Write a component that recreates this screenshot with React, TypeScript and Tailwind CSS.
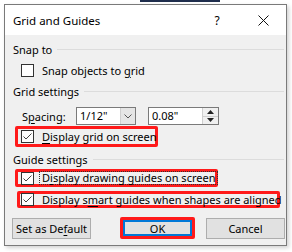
function Check({ checked }: { checked: boolean }) {
  return (
    <span className="flex h-[13px] w-[13px] shrink-0 items-center justify-center border border-[#333333] bg-white">
      {checked && (
        <svg width="11" height="11" viewBox="0 0 11 11" fill="none">
          <path d="M1.5 5.5 L4 8 L9.5 2.5" stroke="#444444" strokeWidth="1" />
        </svg>
      )}
    </span>
  )
}

function GroupLabel({ children }: { children: React.ReactNode }) {
  return (
    <div className="flex h-[16px] items-center gap-[5px] pl-[8px] pr-[2px]">
      <span className="text-[#000000]">{children}</span>
      <span className="h-px flex-1 bg-[#dcdcdc]" />
    </div>
  )
}

function Button({ children, focused }: { children: React.ReactNode; focused?: boolean }) {
  if (focused) {
    return (
      <div className="flex h-[22px] w-[75px] items-stretch rounded-[2px] border-[3px] border-[#ff1a1a]">
        <div className="flex flex-1 items-center justify-center border-2 border-[#0078d7] bg-[#e1e1e1]">
          {children}
        </div>
      </div>
    )
  }
  return (
    <div className="flex h-[21px] w-[79px] items-center justify-center border border-[#adadad] bg-[#e1e1e1]">
      {children}
    </div>
  )
}

export default function App() {
  return (
    <div className="relative h-[252px] w-[292px] overflow-hidden whitespace-nowrap bg-white pl-[4px] pt-[4px] font-['Segoe_UI','Noto_Sans',sans-serif] text-[11px] leading-[15px] text-black">
      <div className="absolute left-[140px] top-0 h-[2px] w-[80px] bg-[#1f2d4d]" />
      <div className="relative flex h-[242px] w-[283px] flex-col border border-[#7a7a7a] bg-[#f0f0f0] shadow-[2px_2px_4px_rgba(0,0,0,0.18)]">
        <div className="flex h-[30px] items-center bg-white pl-[8px]">
          <span className="flex-1 text-[11.5px]">Grid and Guides</span>
          <span className="w-[20px] text-center text-[12px]">?</span>
          <span className="ml-[24px] mr-[11px] flex w-[24px] justify-center">
            <svg width="11" height="11" viewBox="0 0 11 11">
              <path d="M0.5 0.5 L10.5 10.5 M10.5 0.5 L0.5 10.5" stroke="#111" strokeWidth="1" />
            </svg>
          </span>
        </div>

        <div className="mt-[6px]">
          <GroupLabel>Snap to</GroupLabel>
        </div>
        <div className="mt-[5px] flex h-[16px] items-center gap-[8px] pl-[16px]">
          <Check checked={false} />
          <span>
            Snap objects to <span className="underline underline-offset-2">g</span>rid
          </span>
        </div>

        <div className="mt-[5px]">
          <GroupLabel>Grid settings</GroupLabel>
        </div>
        <div className="mt-[8px] flex h-[18px] items-center pl-[17px]">
          <span className="w-[54px]">
            S<span className="underline underline-offset-2">p</span>acing:
          </span>
          <div className="flex h-[18px] w-[60px] border border-[#7a7a7a] bg-white">
            <span className="flex-1 pl-[3px] leading-[16px]">1/12"</span>
            <span className="flex w-[15px] items-center justify-center border-l border-[#cfcfcf] bg-[#e5e5e5]">
              <svg width="8" height="5" viewBox="0 0 8 5" fill="none">
                <path d="M0.5 0.5 L4 4 L7.5 0.5" stroke="#555" strokeWidth="1" />
              </svg>
            </span>
          </div>
          <div className="ml-[12px] flex h-[18px] w-[71px] border border-[#7a7a7a] bg-white">
            <span className="flex-1 pl-[3px] leading-[16px]">0.08"</span>
            <span className="flex w-[16px] flex-col border-l border-[#cfcfcf] bg-[#f0f0f0]">
              <span className="flex flex-1 items-center justify-center border-b border-[#cfcfcf]">
                <svg width="7" height="4" viewBox="0 0 7 4">
                  <path d="M0 4 L3.5 0 L7 4 Z" fill="#222" />
                </svg>
              </span>
              <span className="flex flex-1 items-center justify-center">
                <svg width="7" height="4" viewBox="0 0 7 4">
                  <path d="M0 0 L3.5 4 L7 0 Z" fill="#222" />
                </svg>
              </span>
            </span>
          </div>
        </div>

        <div className="ml-[10px] mt-[1px] flex h-[21px] w-[143px] items-center gap-[8px] rounded-[2px] border-[3px] border-[#ff1a1a] pl-[3px]">
          <Check checked />
          <span>
            <span className="underline underline-offset-2">D</span>isplay grid on screen
          </span>
        </div>

        <div className="mt-[4px]">
          <GroupLabel>Guide settings</GroupLabel>
        </div>

        <div className="ml-[10px] mt-[2px] flex h-[18px] w-[203px] items-center gap-[5px] rounded-[2px] border-[3px] border-[#ff1a1a] pl-[3px]">
          <Check checked />
          <span className="border border-dotted border-[#333] px-[2px] leading-[12px]">
            D<span className="underline underline-offset-2">i</span>splay drawing guides on screen
          </span>
        </div>

        <div className="ml-[12px] mt-[4px] flex h-[17px] w-[263px] items-center gap-[8px] rounded-[2px] border-[3px] border-[#ff1a1a] pl-[1px]">
          <Check checked />
          <span>
            Display s<span className="underline underline-offset-2">m</span>art guides when shapes are aligned
          </span>
        </div>

        <div className="mt-[9px] flex items-center pl-[7px]">
          <Button>
            Set as De<span className="underline underline-offset-2">f</span>ault
          </Button>
          <div className="ml-[29px]">
            <Button focused>OK</Button>
          </div>
          <div className="ml-[11px]">
            <Button>Cancel</Button>
          </div>
        </div>
      </div>
    </div>
  )
}
